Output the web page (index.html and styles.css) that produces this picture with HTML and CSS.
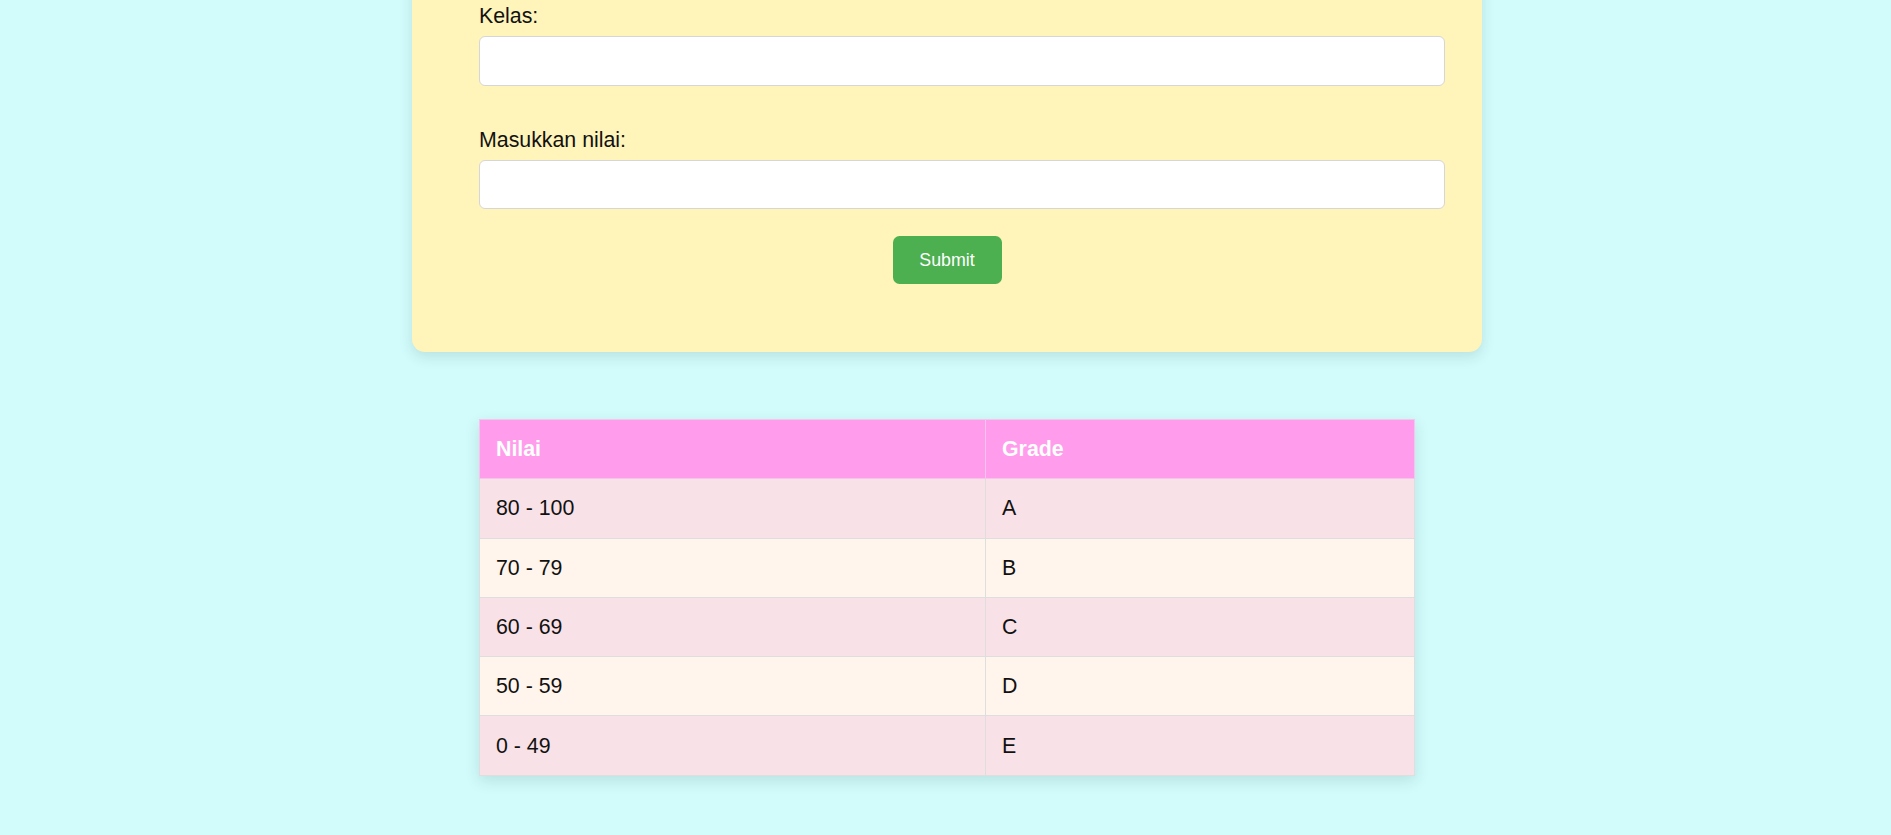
FILE: index.html
```html
<!DOCTYPE html>
<html lang="id">
<head>
<meta charset="utf-8">
<title>Nilai</title>
<link rel="stylesheet" href="styles.css">
</head>
<body>
<div class="page">
  <form class="card">
    <label class="field-label" for="kelas">Kelas:</label>
    <input class="field-input" type="text" id="kelas">
    <label class="field-label" for="nilai">Masukkan nilai:</label>
    <input class="field-input" type="text" id="nilai">
    <div class="actions">
      <button class="submit-btn" type="button">Submit</button>
    </div>
  </form>

  <div class="table-wrap">
    <table class="grade-table">
      <thead>
        <tr><th class="col-nilai">Nilai</th><th>Grade</th></tr>
      </thead>
      <tbody>
        <tr><td>80 - 100</td><td>A</td></tr>
        <tr><td>70 - 79</td><td>B</td></tr>
        <tr><td>60 - 69</td><td>C</td></tr>
        <tr><td>50 - 59</td><td>D</td></tr>
        <tr><td>0 - 49</td><td>E</td></tr>
      </tbody>
    </table>
  </div>
</div>
</body>
</html>
```
FILE: styles.css
```css
* { box-sizing: border-box; }

html, body {
  margin: 0;
  padding: 0;
}

body {
  background: #d2fbfb;
  font-family: "Liberation Sans", Arial, sans-serif;
  color: #111;
  overflow: hidden;
}

.page {
  padding-left: 3px;
  padding-bottom: 40px;
  display: flex;
  flex-direction: column;
  align-items: center;
}

.card {
  width: 1070px;
  margin-top: -30px;
  padding: 34px 37px 68px 67px;
  background: #fff4b9;
  border-radius: 13px;
  box-shadow: 0 5px 14px rgba(0, 40, 40, 0.12);
  display: flex;
  flex-direction: column;
}

.field-label {
  display: block;
  font-size: 21.33px;
  line-height: 24.5px;
  margin-bottom: 7.5px;
}

.field-input {
  display: block;
  width: 966px;
  height: 49.5px;
  margin: 0 0 42px 0;
  border: 1.3px solid #d6d6d6;
  border-radius: 6px;
  background: #fff;
  font-size: 21.33px;
  padding: 0 13px;
}

.field-input:last-of-type {
  margin-bottom: 0;
}

.actions {
  display: flex;
  justify-content: center;
  padding-top: 27px;
  padding-right: 30px;
}

.submit-btn {
  width: 109px;
  height: 48px;
  border: none;
  border-radius: 6.5px;
  background: #4caf50;
  color: #fff;
  font-family: "Liberation Sans", Arial, sans-serif;
  font-size: 17.8px;
  padding: 0;
}

.table-wrap {
  width: 936px;
  margin-top: 67px;
  box-shadow: 0 5px 14px rgba(0, 40, 40, 0.12);
}

.grade-table {
  width: 100%;
  border-collapse: collapse;
  font-size: 21.33px;
}

.grade-table th,
.grade-table td {
  height: 59.3px;
  padding: 0 16px;
  text-align: left;
  line-height: 24px;
  border: 1.3px solid #dedede;
}

.grade-table th {
  background: #ff9cec;
  color: #fff;
  font-weight: bold;
  border-color: #f7c4ee;
  border-top-color: #f2c8ea;
}

.grade-table .col-nilai {
  width: 506px;
}

.grade-table tbody tr:nth-child(odd) td {
  background: #f8e1e7;
}

.grade-table tbody tr:nth-child(even) td {
  background: #fff5ec;
}

.grade-table td {
  color: #111;
}
```
